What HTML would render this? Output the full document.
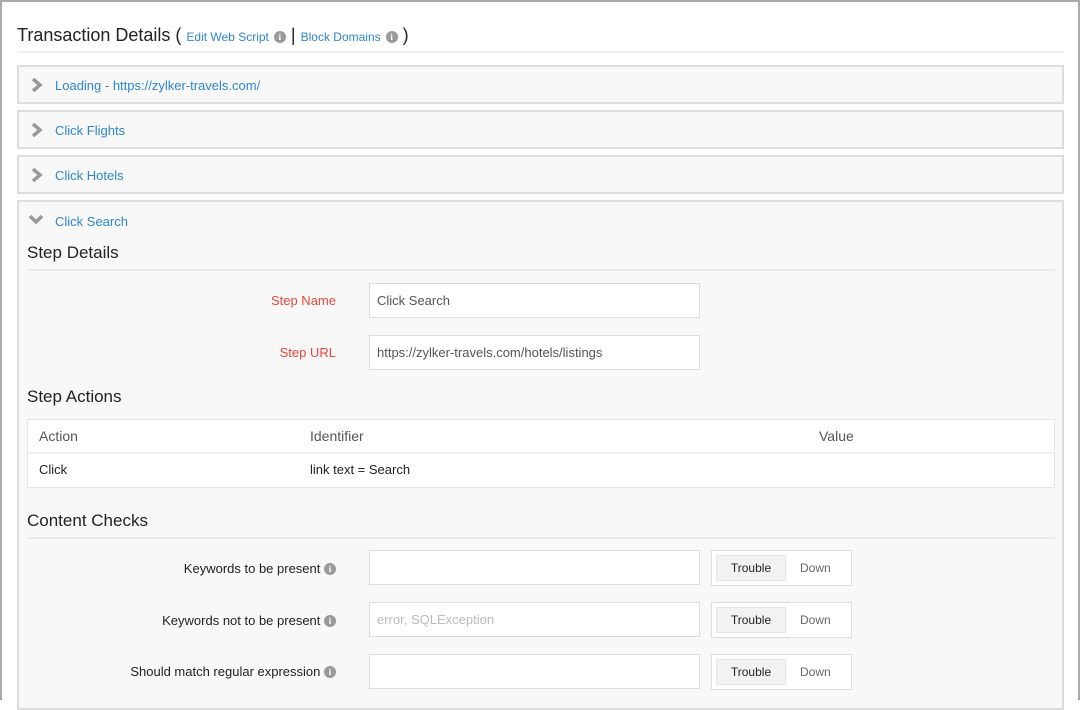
<!DOCTYPE html>
<html><head><meta charset="utf-8"><style>
*{box-sizing:border-box;margin:0;padding:0}
body{width:1080px;height:700px;overflow:hidden;background:#fff;font-family:"Liberation Sans",sans-serif;position:relative;color:#333}
.frame{position:absolute;left:0;top:0;width:1080px;height:700px;border:2px solid #aaa;border-bottom:none}
.a{position:absolute;white-space:nowrap}
.link{color:#2e86d0}
.panel{position:absolute;left:17px;width:1047px;background:#f8f8f8;border:2px solid #ddd}
.chev{position:absolute;left:12px;top:11px}
.ptitle{position:absolute;left:36px;font-size:13px;color:#2e86d0}
.h{position:absolute;left:8px;font-size:17px;color:#222}
.hl{position:absolute;left:8px;width:1028px;height:2px;background:#ebebeb}
.lbl{position:absolute;font-size:13px;text-align:right;white-space:nowrap}
.inp{position:absolute;left:350px;width:331px;height:35px;background:#fff;border:1px solid #ddd;font-size:13px;color:#555;padding:9px 7px;white-space:nowrap}
.tog{position:absolute;left:692px;width:141px;height:36px;background:#fff;border:1px solid #ddd}
.tog .t{position:absolute;left:4px;top:4px;width:70px;height:26px;background:#f2f2f2;border:1px solid #e6e6e6;font-size:12px;color:#222;text-align:center;line-height:24px}
.tog .d{position:absolute;left:88px;top:4px;font-size:12px;color:#666;line-height:26px}
.info{display:inline-block;width:12px;height:12px;border-radius:50%;background:#9a9a9a;color:#fff;font-size:9px;font-weight:bold;text-align:center;line-height:12px;vertical-align:1px;font-family:"Liberation Serif",serif}
</style></head><body>
<div class="frame"></div>
<div class="a" style="left:17px;top:25px;font-size:18px;color:#222">Transaction Details ( <span class="link" style="font-size:12px">Edit Web Script</span> <span class="info">i</span> | <span class="link" style="font-size:12px">Block Domains</span> <span class="info">i</span> )</div>
<div class="a" style="left:17px;top:51px;width:1047px;height:2px;background:#eee"></div>

<div class="panel" style="top:65px;height:39px"><svg class="chev" width="12" height="14" viewBox="0 0 12 14"><path d="M2 1 L9 7 L2 13" fill="none" stroke="#999" stroke-width="3.5"/></svg><div class="ptitle" style="top:11px">Loading - https://zylker-travels.com/</div></div>
<div class="panel" style="top:110px;height:39px"><svg class="chev" width="12" height="14" viewBox="0 0 12 14"><path d="M2 1 L9 7 L2 13" fill="none" stroke="#999" stroke-width="3.5"/></svg><div class="ptitle" style="top:11px">Click Flights</div></div>
<div class="panel" style="top:155px;height:39px"><svg class="chev" width="12" height="14" viewBox="0 0 12 14"><path d="M2 1 L9 7 L2 13" fill="none" stroke="#999" stroke-width="3.5"/></svg><div class="ptitle" style="top:11px">Click Hotels</div></div>

<div class="panel" style="top:200px;height:510px">
<svg style="position:absolute;left:10px;top:12px" width="14" height="10" viewBox="0 0 14 10"><path d="M1 2 L7 8 L13 2" fill="none" stroke="#999" stroke-width="3.5"/></svg>
<div class="ptitle" style="top:12px">Click Search</div>
<div class="h" style="top:41px">Step Details</div>
<div class="hl" style="top:67px"></div>
<div class="lbl" style="right:726px;top:91px;color:#e8463a">Step Name</div>
<div class="inp" style="top:81px">Click Search</div>
<div class="lbl" style="right:726px;top:143px;color:#e8463a">Step URL</div>
<div class="inp" style="top:133px">https://zylker-travels.com/hotels/listings</div>
<div class="h" style="top:185px">Step Actions</div>
<div style="position:absolute;left:8px;top:217px;width:1028px;height:69px;background:#fff;border:1px solid #e6e6e6">
 <div style="position:absolute;left:0;top:32px;width:100%;height:2px;background:#f0f0f0"></div>
 <div class="a" style="left:11px;top:8px;font-size:14px;color:#555">Action</div>
 <div class="a" style="left:282px;top:8px;font-size:14px;color:#555">Identifier</div>
 <div class="a" style="left:791px;top:8px;font-size:14px;color:#555">Value</div>
 <div class="a" style="left:11px;top:42px;font-size:13px;color:#222">Click</div>
 <div class="a" style="left:282px;top:42px;font-size:13px;color:#222">link text = Search</div>
</div>
<div class="h" style="top:309px">Content Checks</div>
<div class="hl" style="top:335px"></div>

<div class="lbl" style="right:726px;top:359px;color:#222">Keywords to be present <span class="info">i</span></div>
<div class="inp" style="top:348px"></div>
<div class="tog" style="top:348px"><div class="t">Trouble</div><div class="d">Down</div></div>

<div class="lbl" style="right:726px;top:411px;color:#222">Keywords not to be present <span class="info">i</span></div>
<div class="inp" style="top:400px;color:#bbb">error, SQLException</div>
<div class="tog" style="top:400px"><div class="t">Trouble</div><div class="d">Down</div></div>

<div class="lbl" style="right:726px;top:462px;color:#222">Should match regular expression <span class="info">i</span></div>
<div class="inp" style="top:452px"></div>
<div class="tog" style="top:452px"><div class="t">Trouble</div><div class="d">Down</div></div>
</div>
</body></html>
